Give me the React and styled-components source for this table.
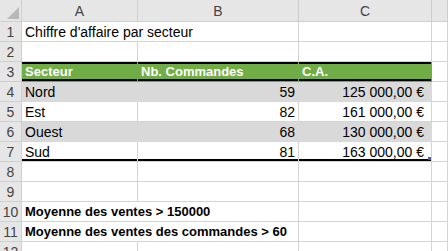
import styled, { createGlobalStyle } from "styled-components";

const rows = [
  { n: 4, name: "Nord", cmd: 59, ca: "125 000,00 €", fill: true },
  { n: 5, name: "Est", cmd: 82, ca: "161 000,00 €" },
  { n: 6, name: "Ouest", cmd: 68, ca: "130 000,00 €", fill: true },
  { n: 7, name: "Sud", cmd: 81, ca: "163 000,00 €", last: true },
];

function App() {
  return (
    <>
      <GlobalStyle />
      <Sheet>
        <Corner>
          <Triangle />
        </Corner>
        <ColHead>A</ColHead>
        <ColHead>B</ColHead>
        <ColHead>C</ColHead>
        <ColHead />

        <RowHead>1</RowHead>
        <Cell $span={2}>Chiffre d'affaire par secteur</Cell>
        <Cell />
        <Cell />

        <RowHead>2</RowHead>
        <Cell />
        <Cell />
        <Cell />
        <Cell />

        <RowHead>3</RowHead>
        <Cell $head>Secteur</Cell>
        <Cell $head>Nb. Commandes</Cell>
        <Cell $head>C.A.</Cell>
        <Cell />

        {rows.map((r) => [
          <RowHead key={`h${r.n}`}>{r.n}</RowHead>,
          <Cell key={`a${r.n}`} $fill={r.fill} $rule={r.last}>
            {r.name}
          </Cell>,
          <Cell key={`b${r.n}`} $fill={r.fill} $rule={r.last} $right>
            {r.cmd}
          </Cell>,
          <Cell key={`c${r.n}`} $fill={r.fill} $rule={r.last} $right $pad={7}>
            {r.ca}
            {r.last && <Handle />}
          </Cell>,
          <Cell key={`d${r.n}`} />,
        ])}

        {[8, 9].map((n) => [
          <RowHead key={`h${n}`}>{n}</RowHead>,
          <Cell key={`a${n}`} />,
          <Cell key={`b${n}`} />,
          <Cell key={`c${n}`} />,
          <Cell key={`d${n}`} />,
        ])}

        <RowHead>10</RowHead>
        <Cell $span={2} $bold>
          Moyenne des ventes &gt; 150000
        </Cell>
        <Cell />
        <Cell />

        <RowHead>11</RowHead>
        <Cell $span={2} $bold>
          Moyenne des ventes des commandes &gt; 60
        </Cell>
        <Cell />
        <Cell />

        <RowHead>12</RowHead>
        <Cell />
        <Cell />
        <Cell />
        <Cell />
      </Sheet>
    </>
  );
}

const GlobalStyle = createGlobalStyle`
  html, body {
    margin: 0;
    background: #fff;
    overflow: hidden;
  }
  body {
    font-family: "Liberation Sans", Arial, sans-serif;
  }
`;

const Sheet = styled.div`
  display: grid;
  grid-template-columns: 22px 116px 161px 133px 1fr;
  grid-template-rows: 22px repeat(12, 20px);
  width: 448px;
  height: 251px;
  overflow: hidden;
  font-size: 14px;
  color: #000;
`;

const Corner = styled.div`
  position: relative;
  background: #e6e6e6;
  border-right: 1px solid #cfcfcf;
  border-bottom: 1px solid #cfcfcf;
`;

const Triangle = styled.div`
  position: absolute;
  right: 2px;
  bottom: 2px;
  width: 0;
  height: 0;
  border-left: 12px solid transparent;
  border-bottom: 12px solid #b8b8b8;
`;

const ColHead = styled.div`
  display: flex;
  align-items: center;
  justify-content: center;
  background: #e6e6e6;
  border-right: 1px solid #cfcfcf;
  border-bottom: 1px solid #cfcfcf;
  color: #444;
  font-size: 14px;
`;

const RowHead = styled.div`
  display: flex;
  align-items: flex-end;
  justify-content: center;
  padding-bottom: 1px;
  box-sizing: border-box;
  background: #e6e6e6;
  border-right: 1px solid #cfcfcf;
  border-bottom: 1px solid #cfcfcf;
  color: #444;
  font-size: 14px;
`;

const Cell = styled.div`
  position: relative;
  display: flex;
  align-items: flex-end;
  justify-content: ${(p) => (p.$right ? "flex-end" : "flex-start")};
  grid-column: ${(p) => (p.$span ? `span ${p.$span}` : "auto")};
  box-sizing: border-box;
  padding: 0 ${(p) => (p.$right ? p.$pad || 3 : 3)}px
    ${(p) => (p.$bold || p.$head ? 2 : 1)}px 3px;
  white-space: nowrap;
  overflow: visible;
  font-size: ${(p) => (p.$bold || p.$head ? 13 : 14)}px;
  font-weight: ${(p) => (p.$bold || p.$head ? 700 : 400)};
  color: ${(p) => (p.$head ? "#fff" : "#000")};
  background: ${(p) => (p.$head ? "#70ad47" : p.$fill ? "#d9d9d9" : "#fff")};
  border-right: 1px solid
    ${(p) => (p.$head || p.$fill ? "transparent" : "#d4d4d4")};
  border-bottom: 1px solid
    ${(p) => (p.$head || p.$fill ? "transparent" : "#d4d4d4")};
  box-shadow: ${(p) =>
    p.$head
      ? "inset 0 2px 0 #000, inset 0 -2px 0 #000"
      : p.$rule
      ? "inset 0 -2px 0 #000"
      : "none"};
`;

const Handle = styled.span`
  position: absolute;
  right: 0;
  bottom: 1px;
  width: 3px;
  height: 3px;
  background: #4a5fa8;
`;

export default App;
